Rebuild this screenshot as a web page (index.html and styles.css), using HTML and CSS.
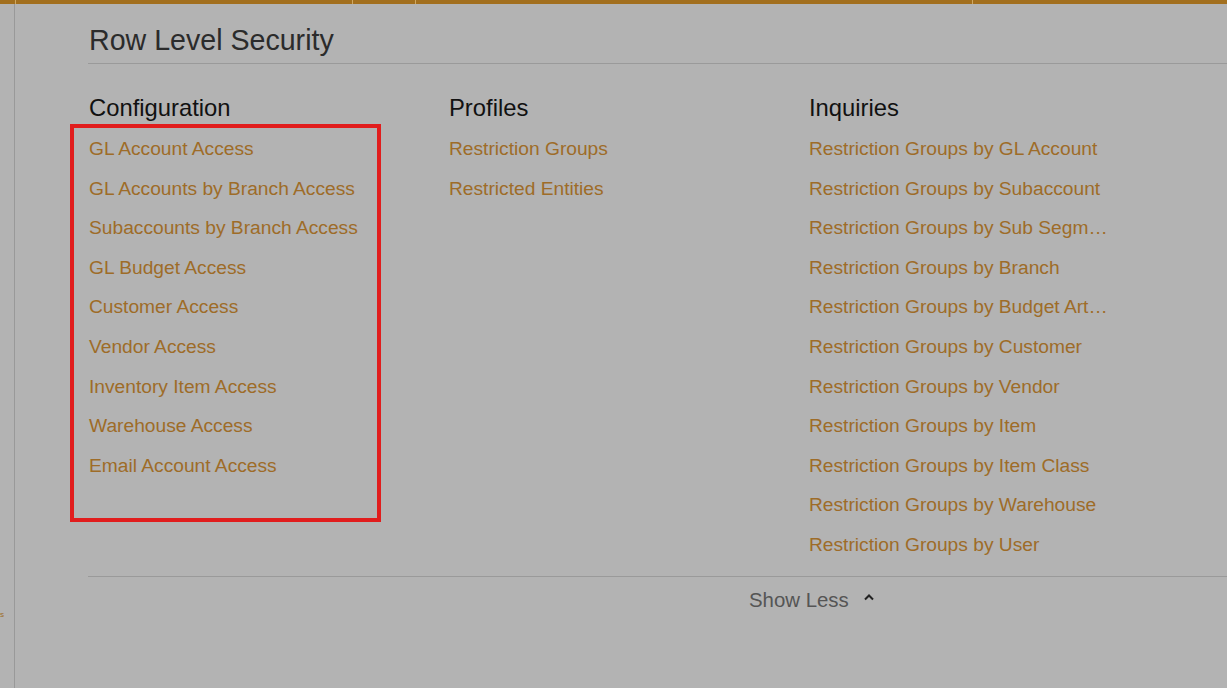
FILE: index.html
```html
<!DOCTYPE html>
<html lang="en">
<head>
<meta charset="utf-8">
<title>Row Level Security</title>
<link rel="stylesheet" href="styles.css">
</head>
<body>
  <div class="topbar">
    <div class="tab tab-a"></div>
    <div class="tab tab-b"></div>
    <div class="tab tab-c"></div>
    <div class="tab tab-d"></div>
    <div class="tab tab-e"></div>
  </div>
  <div class="frame">
    <aside class="sidebar">
      <span class="side-label">s</span>
    </aside>
    <main class="workspace">
      <h1 class="ws-title">Row Level Security</h1>
      <div class="ws-columns">
        <section class="ws-col">
          <h2 class="col-head">Configuration</h2>
          <a class="ws-link" href="#">GL Account Access</a>
          <a class="ws-link" href="#">GL Accounts by Branch Access</a>
          <a class="ws-link" href="#">Subaccounts by Branch Access</a>
          <a class="ws-link" href="#">GL Budget Access</a>
          <a class="ws-link" href="#">Customer Access</a>
          <a class="ws-link" href="#">Vendor Access</a>
          <a class="ws-link" href="#">Inventory Item Access</a>
          <a class="ws-link" href="#">Warehouse Access</a>
          <a class="ws-link" href="#">Email Account Access</a>
        </section>
        <section class="ws-col">
          <h2 class="col-head">Profiles</h2>
          <a class="ws-link" href="#">Restriction Groups</a>
          <a class="ws-link" href="#">Restricted Entities</a>
        </section>
        <section class="ws-col">
          <h2 class="col-head">Inquiries</h2>
          <a class="ws-link" href="#">Restriction Groups by GL Account</a>
          <a class="ws-link" href="#">Restriction Groups by Subaccount</a>
          <a class="ws-link" href="#">Restriction Groups by Sub Segm…</a>
          <a class="ws-link" href="#">Restriction Groups by Branch</a>
          <a class="ws-link" href="#">Restriction Groups by Budget Art…</a>
          <a class="ws-link" href="#">Restriction Groups by Customer</a>
          <a class="ws-link" href="#">Restriction Groups by Vendor</a>
          <a class="ws-link" href="#">Restriction Groups by Item</a>
          <a class="ws-link" href="#">Restriction Groups by Item Class</a>
          <a class="ws-link" href="#">Restriction Groups by Warehouse</a>
          <a class="ws-link" href="#">Restriction Groups by User</a>
        </section>
      </div>
      <div class="ws-footer">
        <button class="toggle" type="button">
          <span>Show Less</span>
          <svg class="chev" width="12" height="8" viewBox="0 0 12 8" aria-hidden="true">
            <path d="M2 6.5 L6 2.5 L10 6.5" fill="none" stroke="#222" stroke-width="2"/>
          </svg>
        </button>
      </div>
    </main>
  </div>
  <div class="highlight"></div>
</body>
</html>
```

FILE: styles.css
```css
html, body {
  margin: 0;
  height: 100%;
}

body {
  background: #b3b3b3;
  font-family: "Liberation Sans", Arial, sans-serif;
  overflow: hidden;
  position: relative;
}

/* top navigation strip */
.topbar {
  display: flex;
  height: 4px;
  background: #a26f1e;
}
.tab {
  height: 4px;
  border-left: 1px solid #cfa862;
}
.tab-a { width: 15px; border-left: none; }
.tab-b { width: 336px; }
.tab-c { width: 62px; }
.tab-d { width: 556px; }
.tab-e { flex: 1; }

.frame {
  display: flex;
  height: calc(100% - 4px);
}

/* narrow left rail */
.sidebar {
  width: 15px;
  flex: none;
  border-right: 1px solid #999;
  display: flex;
  flex-direction: column;
  justify-content: flex-end;
  align-items: flex-start;
  padding-bottom: 68px;
  box-sizing: border-box;
}
.side-label {
  font-size: 8px;
  line-height: 10px;
  color: #9e6c28;
}

.workspace {
  flex: 1;
  padding-left: 73px;
}

.ws-title {
  margin: 19px 0 0;
  padding: 0 0 6px 1px;
  font-size: 28.6px;
  line-height: 34px;
  font-weight: normal;
  color: #2b2b2b;
  border-bottom: 1px solid #9a9a9a;
}

.ws-columns {
  display: grid;
  grid-template-columns: 360px 360px 360px;
  padding: 30px 0 11px 1px;
  border-bottom: 1px solid #9a9a9a;
}

.ws-col {
  display: flex;
  flex-direction: column;
  align-items: flex-start;
}

.col-head {
  margin: 0 0 7px;
  font-size: 23.8px;
  line-height: 28px;
  font-weight: normal;
  color: #111;
}

.ws-link {
  font-size: 19.2px;
  line-height: 39.6px;
  color: #9e6c28;
  text-decoration: none;
  white-space: nowrap;
}

.ws-footer {
  display: flex;
  padding-top: 11px;
  padding-left: 661px;
}

.toggle {
  display: flex;
  align-items: center;
  gap: 14px;
  background: none;
  border: none;
  padding: 0;
  font-family: inherit;
  font-size: 20.4px;
  line-height: 24px;
  color: #555;
  cursor: pointer;
}
.chev {
  margin-top: -6px;
}

/* red outline drawn over the configuration list */
.highlight {
  position: absolute;
  left: 70px;
  top: 124px;
  width: 303px;
  height: 390px;
  border: 4px solid #e11d1d;
  pointer-events: none;
}
```
